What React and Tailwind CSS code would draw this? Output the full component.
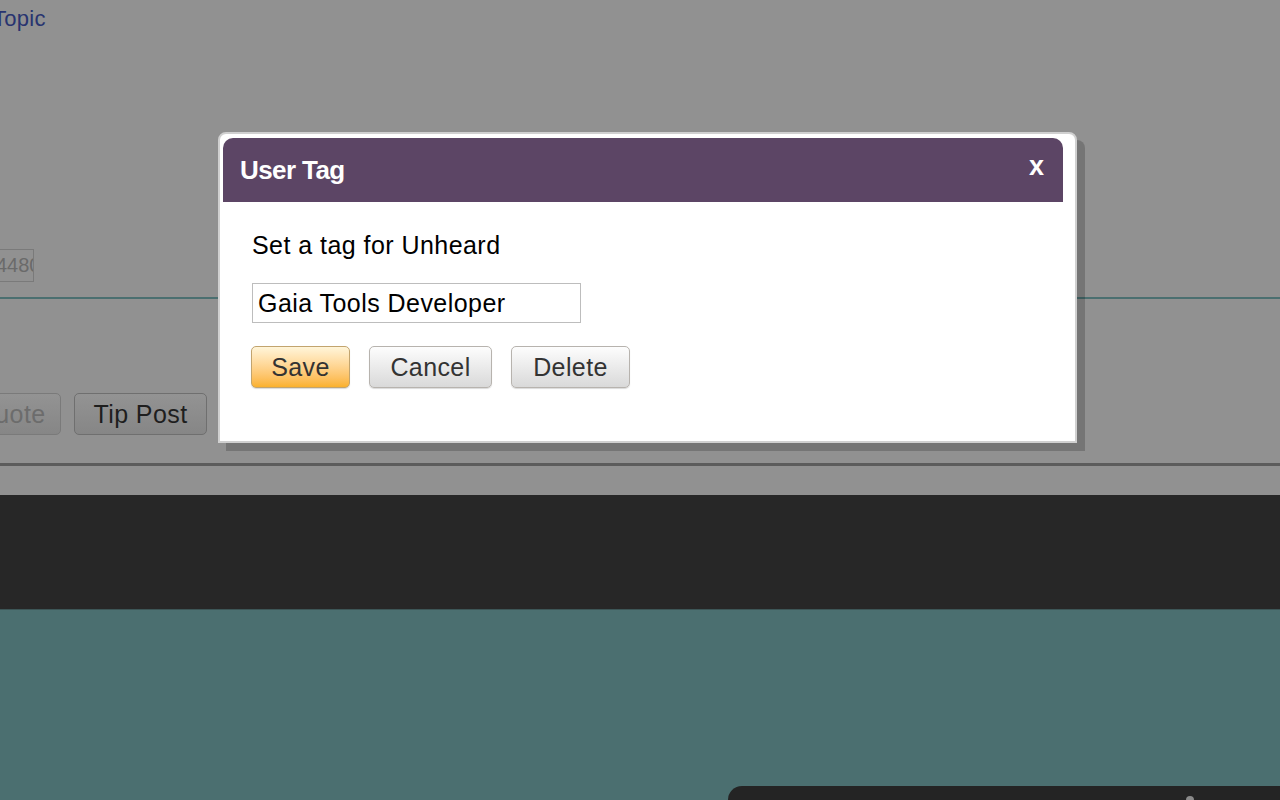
import React from "react";

function GrayButton({ label, width }) {
  return (
    <button
      className={`h-[42px] ${width} pt-[2px] rounded-[5px] border border-[#b7b3ae] bg-gradient-to-b from-[#fdfdfd] to-[#d9d9d9] text-[25px] tracking-[0.4px] text-[#333] shadow-[0_1px_1px_rgba(0,0,0,0.15)]`}
    >
      {label}
    </button>
  );
}

export default function App() {
  return (
    <div className="w-[1280px] h-[800px] overflow-hidden font-['Liberation_Sans',Arial,sans-serif] flex flex-col">
      {/* dimmed page */}
      <div className="relative h-[495px] bg-[#919191] flex flex-col">
        <div className="-ml-[7px] mt-[4px] text-[22px] leading-[29px] tracking-[0.3px] text-[#283470]">Topic</div>

        <div className="mt-[216px] -ml-[40px] w-[74px] h-[33px] border border-[#7a7a7a] overflow-hidden whitespace-nowrap text-[20px] leading-[31px] text-[#6a6a6a] pl-[35px]">
          44801
        </div>

        <div className="mt-[15px] h-[2px] bg-[#4b6f70]" />

        <div className="mt-[94px] flex gap-[13px]">
          <button className="-ml-[40px] h-[42px] w-[101px] pt-[2px] rounded-[5px] border border-[#7a7a7a] bg-gradient-to-b from-[#939393] to-[#868686] text-[25px] tracking-[0.4px] text-[#6c6c6c]">
            Quote
          </button>
          <button className="h-[42px] w-[133px] pt-[2px] rounded-[5px] border border-[#6f6f6f] bg-gradient-to-b from-[#939393] to-[#868686] text-[25px] tracking-[0.4px] text-[#1e1e1e]">
            Tip Post
          </button>
        </div>

        <div className="mt-[28px] h-[3px] bg-[#5c5c5c]" />

        {/* modal */}
        <div className="absolute left-[218px] top-[132px] w-[859px] h-[311px] bg-white border-2 border-[#d0d0d0] rounded-t-[8px] shadow-[8px_8px_0_rgba(0,0,0,0.19)]">
          <div className="ml-[3px] mt-[4px] w-[840px] h-[64px] rounded-t-[10px] bg-[#5c4565] flex items-center justify-between pl-[17px] pr-[19px] text-white">
            <span className="text-[26px] font-semibold tracking-[-0.6px] pt-[1px]">User Tag</span>
            <span className="text-[27px] font-bold -mt-[8px]">x</span>
          </div>
          <div className="pl-[32px] pt-[29px] flex flex-col">
            <div className="text-[25px] leading-[29px] tracking-[0.45px] text-black">Set a tag for Unheard</div>
            <input
              defaultValue="Gaia Tools Developer"
              className="mt-[23px] w-[329px] h-[40px] border border-[#bdbdbd] px-[5px] text-[25px] tracking-[0.45px] text-black outline-none font-['Liberation_Sans',Arial,sans-serif]"
            />
            <div className="mt-[23px] -ml-[1px] flex gap-[19px]">
              <button className="h-[42px] w-[99px] pt-[2px] rounded-[5px] border border-[#c2a46e] bg-gradient-to-b from-[#fff5d9] to-[#fbb12a] text-[25px] tracking-[0.4px] text-[#333] shadow-[0_1px_1px_rgba(0,0,0,0.15)]">
                Save
              </button>
              <GrayButton label="Cancel" width="w-[123px]" />
              <GrayButton label="Delete" width="w-[119px]" />
            </div>
          </div>
        </div>
      </div>

      {/* dark band */}
      <div className="h-[115px] bg-[#272727] border-b border-[#3d5657]" />

      {/* teal area */}
      <div className="flex-1 bg-[#4b6f70] flex flex-col justify-end items-end">
        <div className="w-[552px] h-[14px] bg-[#242424] rounded-tl-[16px] relative">
          <div className="absolute left-[458px] top-[10px] w-[8px] h-[8px] rounded-full bg-[#8a8a8a]" />
        </div>
      </div>
    </div>
  );
}
